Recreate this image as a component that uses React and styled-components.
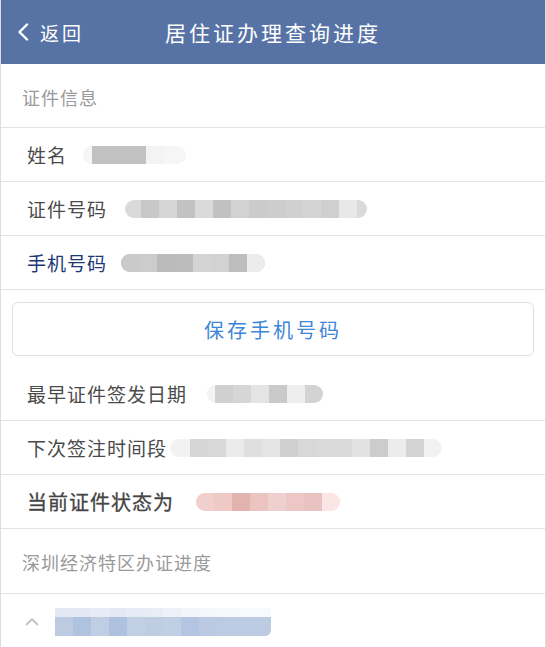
import React from 'react'
import styled, { createGlobalStyle } from 'styled-components'

const GlobalStyle = createGlobalStyle`
  html, body {
    margin: 0;
    padding: 0;
    background: #fff;
  }
  body {
    font-family: "Noto Sans CJK SC", "Noto Sans", sans-serif;
  }
`

const Page = styled.div`
  width: 546px;
  min-height: 647px;
  box-sizing: border-box;
  border-left: 1px solid #dcdcdc;
  border-right: 1px solid #dcdcdc;
  background: #fff;
  overflow: hidden;
`

const NavBar = styled.div`
  height: 64px;
  background: #5773a6;
  display: flex;
  align-items: center;
  position: relative;
  color: #fff;
`

const Back = styled.div`
  display: flex;
  align-items: center;
  gap: 11px;
  padding-left: 16px;
  font-size: 19px;
  letter-spacing: 3px;
`

const Title = styled.div`
  position: absolute;
  left: 0;
  right: 0;
  text-align: center;
  font-size: 21px;
  letter-spacing: 3px;
  pointer-events: none;
`

const SectionHead = styled.div`
  height: ${p => p.h || 64}px;
  display: flex;
  align-items: center;
  padding-left: 21px;
  padding-top: 2px;
  font-size: 18px;
  letter-spacing: 1px;
  color: #9a9a9a;
  border-bottom: 1px solid #e4e4e4;
  box-sizing: border-box;
`

const Row = styled.div`
  height: 54px;
  display: flex;
  align-items: center;
  padding-left: 26px;
  gap: ${p => p.gap ?? 14}px;
  border-bottom: ${p => (p.last ? 'none' : '1px solid #e4e4e4')};
  box-sizing: border-box;
`

const Label = styled.span`
  font-size: ${p => (p.bold ? 20 : 19)}px;
  letter-spacing: 1px;
  color: ${p => p.color || '#4a4a4a'};
  -webkit-text-stroke: ${p => (p.bold ? '0.3px' : '0')};
  white-space: nowrap;
`

const ButtonWrap = styled.div`
  padding: 12px 11px 11px;
`

const SaveButton = styled.button`
  width: 100%;
  height: 54px;
  border: 1px solid #dedede;
  border-radius: 6px;
  background: #fff;
  color: #3f86d8;
  font-family: inherit;
  font-size: 20px;
  letter-spacing: 3px;
  display: flex;
  align-items: center;
  justify-content: center;
  padding: 0;
`

const Mosaic = styled.div`
  display: flex;
  height: ${p => p.h || 18}px;
  border-radius: 9px;
  overflow: hidden;
  background: ${p => p.bg || '#f4f4f4'};
  padding: 0 ${p => p.pr || 0}px 0 ${p => p.pl || 0}px;
  margin-left: ${p => p.ml || 0}px;
`

const Block = styled.span`
  width: 18px;
  height: 100%;
  flex: none;
`

const AccordionRow = styled.div`
  height: 55px;
  display: flex;
  align-items: center;
  padding-left: 24px;
  gap: 16px;
`

const BlueMosaic = styled.div`
  display: flex;
  flex-direction: column;
  width: 216px;
  height: 28px;
  border-radius: 0 0 6px 0;
  overflow: hidden;
  position: relative;
`

const MosaicLine = styled.div`
  display: flex;
  height: ${p => p.h}px;
`

const Blur = ({ colors, ...rest }) => (
  <Mosaic {...rest}>
    {colors.map((c, i) => (
      <Block key={i} style={{ background: c }} />
    ))}
  </Mosaic>
)

const nameColors = ['#c2c2c2', '#c2c2c2', '#c2c2c2', '#f3f3f3']
const idColors = ['#c8c8c8', '#d5d5d5', '#c2c2c2', '#dadada', '#c1c1c1', '#d2d2d2', '#cbcbcb', '#cdcdcd', '#d0d0d0', '#d4d4d4', '#cfcfcf', '#e8e8e8']
const phoneColors = ['#cacaca', '#cccccc', '#bbbbbb', '#bcbcbc', '#d4d4d4', '#d2d2d2', '#bdbdbd', '#ececec']
const dateColors = ['#d0d0d0', '#d6d6d6', '#e4e4e4', '#cacaca', '#eeeeee', '#d3d3d3']
const nextColors = ['#d5d5d5', '#d8d8d8', '#ebebeb', '#dfdfdf', '#e4e4e4', '#cfcfcf', '#d8d8d8', '#dadada', '#dadada', '#e2e2e2', '#cccccc', '#ececec', '#d4d4d4']
const statusColors = ['#f1cfcc', '#eec9c6', '#e3b3b0', '#ebc3c1', '#eed0cf', '#ecc7c6', '#e8c3c1', '#fbe6e5']
const blueTop = ['#e3e9f3', '#e3e9f3', '#e6ecf5', '#e3e9f3', '#e6ecf5', '#e8eef6', '#eef2f8', '#f2f5f9', '#f4f6fa', '#f6f8fb', '#f7f9fb', '#f7f9fb']
const blueBottom = ['#bccbe2', '#afc2de', '#c0cee4', '#aec1de', '#c2d0e5', '#bfcde3', '#c1cfe4', '#b3c5e0', '#bbcae2', '#bccbe2', '#bccbe2', '#bccbe2']

function App () {
  return (
    <>
      <GlobalStyle />
      <Page>
        <NavBar>
          <Back>
            <svg width="12" height="18" viewBox="0 0 12 18">
              <path d="M10 1.5 L2.5 9 L10 16.5" fill="none" stroke="#fff" strokeWidth="2.4" strokeLinecap="round" strokeLinejoin="round" />
            </svg>
            返回
          </Back>
          <Title>居住证办理查询进度</Title>
        </NavBar>

        <SectionHead>证件信息</SectionHead>
        <Row gap={16}>
          <Label>姓名</Label>
          <Blur colors={nameColors} pl={9} pr={22} bg="#f6f6f6" />
        </Row>
        <Row gap={18}>
          <Label>证件号码</Label>
          <Blur colors={idColors} pl={16} pr={10} bg="#dadada" />
        </Row>
        <Row gap={14}>
          <Label color="#1d3876">手机号码</Label>
          <Blur colors={phoneColors} pl={0} bg="#cccccc" />
        </Row>

        <ButtonWrap>
          <SaveButton>保存手机号码</SaveButton>
        </ButtonWrap>

        <Row gap={20}>
          <Label>最早证件签发日期</Label>
          <Blur colors={dateColors} pl={8} bg="#f3f3f3" />
        </Row>
        <Row gap={0}>
          <Label>下次签注时间段</Label>
          <Blur colors={nextColors} pl={20} pr={18} bg="#f2f2f2" ml={3} />
        </Row>
        <Row gap={22}>
          <Label bold color="#444">当前证件状态为</Label>
          <Blur colors={statusColors} bg="#fbe9e8" />
        </Row>

        <SectionHead h={65}>深圳经济特区办证进度</SectionHead>
        <AccordionRow>
          <svg width="14" height="9" viewBox="0 0 14 9">
            <path d="M1.5 7.5 L7 2 L12.5 7.5" fill="none" stroke="#c4c4c4" strokeWidth="2" strokeLinecap="round" strokeLinejoin="round" />
          </svg>
          <BlueMosaic>
            <MosaicLine h={9}>
              {blueTop.map((c, i) => <Block key={i} style={{ background: c }} />)}
            </MosaicLine>
            <MosaicLine h={19}>
              {blueBottom.map((c, i) => <Block key={i} style={{ background: c }} />)}
            </MosaicLine>
          </BlueMosaic>
        </AccordionRow>
      </Page>
    </>
  )
}

export default App
